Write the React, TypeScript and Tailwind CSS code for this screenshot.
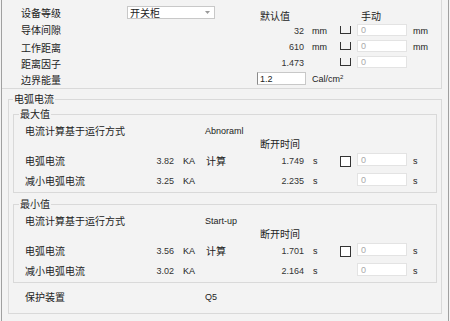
import React from "react";

type CaseRow = { label: string; current: string; time: string; calc: boolean };

// latin text and numbers use a narrower face than the chinese labels
const LAT = "font-['Liberation_Sans',sans-serif] text-[9px]";

const Check = () => <span className="block h-[11px] w-[11px] border border-[#333] bg-white" />;

const ClippedCheck = () => (
  <span className="block h-[8px] w-[11px] border-x border-b border-[#333]" />
);

const Field = ({ value = "0", className = "" }: { value?: string; className?: string }) => (
  <div
    className={
      "flex w-[50px] shrink-0 items-center border border-[#e3e3e3] bg-white pl-[3px] text-[#aaa] " +
      LAT +
      " " +
      className
    }
  >
    {value}
  </div>
);

const ManualRow = ({
  h,
  value,
  unit,
}: {
  h: string;
  value: string;
  unit?: string;
}) => (
  <div className={"flex items-center " + h}>
    <span className={"w-[54px] shrink-0 text-right text-[#333] " + LAT}>{value}</span>
    <span className={"w-[36px] shrink-0 pl-[8px] " + LAT}>{unit}</span>
    <span className="w-[17px] shrink-0 self-start pt-[3px]">
      <ClippedCheck />
    </span>
    <Field className="mt-[1px] h-[12px] self-start" />
    {unit && <span className={"pl-[6px] " + LAT}>{unit}</span>}
  </div>
);

const TopPanel = () => (
  <div className="flex h-[89px] w-[440px] border-b border-r border-[#d9d9d9]">
    <div className="flex w-[248px] shrink-0 flex-col pl-[19px] pt-[4px]">
      <div className="flex h-[17px] items-center">
        <span className="w-[106px] shrink-0">设备等级</span>
        <div className="flex h-[13px] w-[88px] items-center justify-between border border-[#c8c8c8] bg-white pl-[2px] pr-[4px]">
          <span>开关柜</span>
          <svg width="5" height="3" viewBox="0 0 5 3">
            <path d="M0 0 L5 0 L2.5 3 Z" fill="#9a9a9a" />
          </svg>
        </div>
      </div>
      <div className="flex h-[18px] items-center">导体间隙</div>
      <div className="flex h-[17px] items-center">工作距离</div>
      <div className="flex h-[15px] items-center">距离因子</div>
      <div className="flex h-[17px] items-center">边界能量</div>
    </div>

    <div className="flex flex-col pt-[8px]">
      <div className="flex h-[15px] items-center">
        <span className="w-[107px] shrink-0 pl-[10px]">默认值</span>
        <span className="pl-[4px]">手动</span>
      </div>
      <ManualRow h="h-[16px]" value="32" unit="mm" />
      <ManualRow h="h-[16px]" value="610" unit="mm" />
      <ManualRow h="h-[15px]" value="1.473" />
      <div className="flex h-[17px] items-center">
        <div
          className={
            "ml-[7px] flex h-[13px] w-[49px] items-center border border-[#c8c8c8] border-l-[#8a8a8a] bg-white pl-[2px] text-[#222] " +
            LAT
          }
        >
          1.2
        </div>
        <span className={"ml-[6px] " + LAT}>
          Cal/cm<sup className="text-[6px]">2</sup>
        </span>
      </div>
    </div>
  </div>
);

const CaseGroup = ({
  title,
  mode,
  rows,
  className = "",
}: {
  title: string;
  mode: string;
  rows: CaseRow[];
  className?: string;
}) => (
  <fieldset
    className={"w-[424px] border border-[#d9d9d9] pb-[2px] pl-[5px] pt-[1px] " + className}
  >
    <legend className="px-[1px]">{title}</legend>
    <div className="flex h-[17px] items-center">
      <span className="w-[186px] shrink-0 pl-[6px]">电流计算基于运行方式</span>
      <span className={LAT}>{mode}</span>
    </div>
    <div className="h-[12px] pl-[241px] leading-[10px]">断开时间</div>
    {rows.map((r, i) => (
      <div key={r.label} className={"flex items-center " + (i === 0 ? "h-[20px]" : "h-[19px]")}>
        <span className="w-[131px] shrink-0 pl-[6px]">{r.label}</span>
        <span className={"w-[24px] shrink-0 text-right text-[#333] " + LAT}>{r.current}</span>
        <span className={"w-[32px] shrink-0 pl-[9px] " + LAT}>KA</span>
        <span className="w-[44px] shrink-0">{r.calc ? "计算" : ""}</span>
        <span className={"w-[54px] shrink-0 text-right text-[#333] " + LAT}>{r.time}</span>
        <span className={"w-[36px] shrink-0 pl-[9px] " + LAT}>s</span>
        <span className="w-[17px] shrink-0">{r.calc && <Check />}</span>
        <Field className="mt-[2px] h-[13px] self-start" />
        <span className={"pl-[6px] " + LAT}>s</span>
      </div>
    ))}
  </fieldset>
);

export default function App() {
  return (
    <div className="h-[321px] w-[450px] overflow-hidden bg-[#f3f3f3] pl-[1px] font-['Noto_Sans','Noto_Sans_CJK_SC',sans-serif] text-[10px] leading-[14px] text-[#222]">
      <div className="h-full w-[448px] border-x border-[#a0a0a0]">
        <TopPanel />

        <fieldset className="ml-[6px] mt-[3px] w-[434px] border border-[#d9d9d9] px-[4px] pb-[6px]">
          <legend className="px-[1px]">电弧电流</legend>
          <CaseGroup
            title="最大值"
            mode="Abnoraml"
            className="mt-[1px]"
            rows={[
              { label: "电弧电流", current: "3.82", time: "1.749", calc: true },
              { label: "减小电弧电流", current: "3.25", time: "2.235", calc: false },
            ]}
          />
          <CaseGroup
            title="最小值"
            mode="Start-up"
            className="mt-[4px]"
            rows={[
              { label: "电弧电流", current: "3.56", time: "1.701", calc: true },
              { label: "减小电弧电流", current: "3.02", time: "2.164", calc: false },
            ]}
          />
          <div className="mt-[4px] flex h-[20px] items-center">
            <span className="w-[192px] shrink-0 pl-[12px]">保护装置</span>
            <span className={LAT}>Q5</span>
          </div>
        </fieldset>

        <fieldset className="ml-[6px] mt-[6px] h-[40px] w-[434px] border border-[#d9d9d9] px-[4px]">
          <legend className="px-[1px]">结果</legend>
        </fieldset>
      </div>
    </div>
  );
}
